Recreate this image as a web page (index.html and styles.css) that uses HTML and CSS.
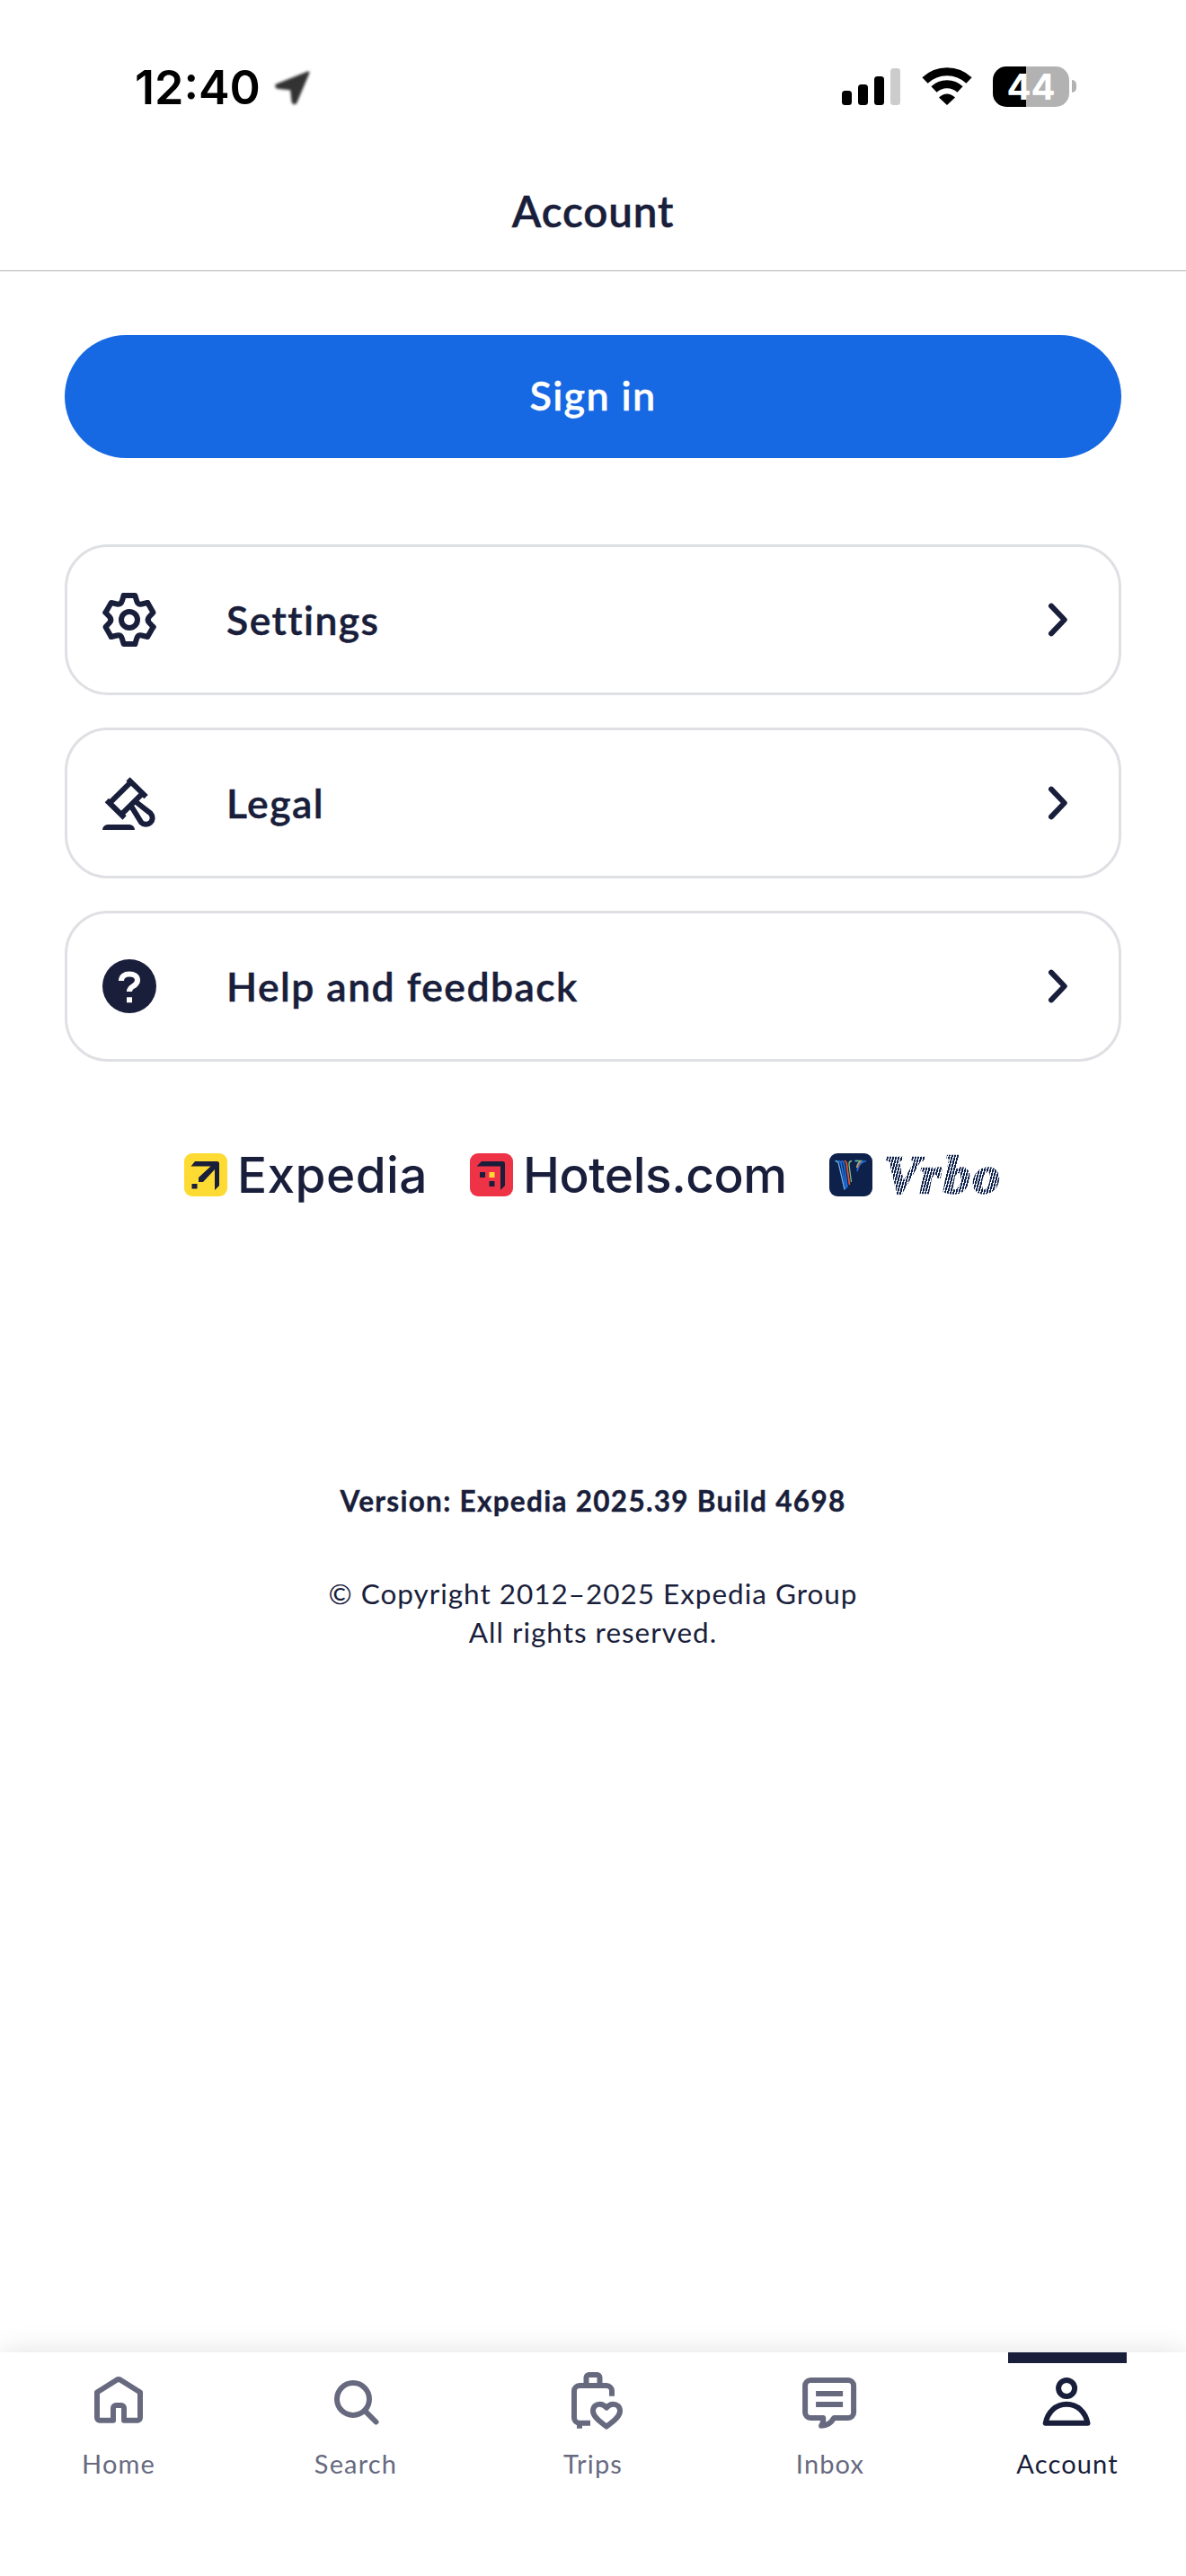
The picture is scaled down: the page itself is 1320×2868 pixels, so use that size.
FILE: index.html
```html
<!DOCTYPE html>
<html lang="en">
<head>
<meta charset="utf-8">
<title>Account</title>
<link rel="stylesheet" href="styles.css">
</head>
<body>
<div class="screen">
  <header class="header">
    <div class="status">
      <div class="status-left">
        <span class="time">12:40</span>
        <svg class="location" width="48" height="48" viewBox="0 0 48 48"><path d="M41 9 6 23Q5 25 8 25.500L22.500 27 24 41Q25 44 27 42Z" /></svg>
      </div>
      <div class="status-right">
        <svg class="signal" width="65" height="41" viewBox="0 0 65 41"><rect x="0" y="25" width="11" height="16" rx="3.500"/><rect x="18" y="18" width="11" height="23" rx="3.500"/><rect x="36" y="9" width="11" height="32" rx="3.500"/><rect class="dim" x="54" y="0" width="11" height="41" rx="3.500"/></svg>
        <svg class="wifi" width="58" height="42" viewBox="0 0 58 42"><path d="M4.500 14.500A35.500 35.500 0 0 1 53.500 14.500M14.500 24.500A21 21 0 0 1 43.500 24.500"/><path class="dot" d="M29 42 20 33.500Q29 25.500 38 33.500Z"/></svg>
        <div class="battery"><span class="level">44</span></div>
      </div>
    </div>
    <h1 class="title">Account</h1>
  </header>

  <main class="main">
    <button class="signin">Sign in</button>
    <nav class="cards">
      <a class="card">
        <svg class="icon" viewBox="-12 -12 24 24"><defs><path id="tooth" d="M-2.100-9H2.100L2.750-6.900Q3.200-5.550 4.600-5.830L6.740-6.320"/></defs><use href="#tooth"/><use href="#tooth" transform="rotate(60)"/><use href="#tooth" transform="rotate(120)"/><use href="#tooth" transform="rotate(180)"/><use href="#tooth" transform="rotate(240)"/><use href="#tooth" transform="rotate(300)"/><circle r="3"/></svg>
        <span class="label">Settings</span>
        <svg class="icon" viewBox="0 0 24 24"><path d="M10 6.900 14.900 12 10 17.100"/></svg>
      </a>
      <a class="card">
        <svg class="icon" viewBox="0 0 24 24"><path class="butt" d="M11.500 3.100 18.200 9.700M3.600 11 10.200 17.500M12.500 4.300 5.100 11.600M16.700 8.600 9.400 15.900M12.700 13.200 16.400 19.200A2.400 2.400 0 0 0 19.900 15.900L14.300 11.500"/><path class="solid" d="M2 22a2 2 0 0 1 2-2h8a2 2 0 0 1 2 2z"/></svg>
        <span class="label">Legal</span>
        <svg class="icon" viewBox="0 0 24 24"><path d="M10 6.900 14.900 12 10 17.100"/></svg>
      </a>
      <a class="card">
        <svg class="icon" viewBox="0 0 24 24"><circle class="solid" cx="12" cy="12" r="10"/><path class="mark" d="M9 10C9 8.300 10.300 7.500 12 7.500S15 8.300 15 9.800C15 11 14.200 11.500 13.400 12 12.500 12.500 12 12.900 12 14M12 16.100v2"/></svg>
        <span class="label">Help and feedback</span>
        <svg class="icon" viewBox="0 0 24 24"><path d="M10 6.900 14.900 12 10 17.100"/></svg>
      </a>
    </nav>

    <div class="brands">
      <div class="brand">
        <svg width="48" height="48" viewBox="0 0 48 48"><rect width="48" height="48" rx="9" fill="#fddb32"/><path fill="#191e3b" d="M12 9H36.500Q39 9 39 11.500V36L34 41V18L21 32H16V27L29.500 14.500H7.500ZM8.500 34h6v5.500h-6z"/></svg>
        <span class="name expedia">Expedia</span>
      </div>
      <div class="brand">
        <svg width="48" height="48" viewBox="0 0 48 48"><rect width="48" height="48" rx="9" fill="#ef3346"/><path fill="#191e3b" d="M13 9H36.500Q39 9 39 11.500V36L34 41V14.500H7.500ZM11 21h6v6h-6zM21.500 31h6v6h-6z"/><path fill="#fddb32" d="M21.500 21h6v6h-6z"/></svg>
        <span class="name hotels">Hotels.com</span>
      </div>
      <div class="brand">
        <svg width="48" height="48" viewBox="0 0 48 48" fill="none" stroke-width="1.300"><rect width="48" height="48" rx="9" fill="#0e214b"/><path stroke="#6bb4f0" d="M6.500 8.500Q10 8.500 10.500 12L17 40.500"/><path stroke="#1f6fe0" stroke-width="1.700" d="M10 8.500Q13 9 13.500 13L18.500 40M13 8.500Q16 9 16.500 13L20 38M28 8.500h4M41 8.500Q33 10 31 20M38 8.500Q33 10 31 17"/><path stroke="#ea5a2a" stroke-width="1.700" d="M16.500 8.500Q19.500 9 19.500 13L22.500 35M35.500 8.500Q32 11 31 16"/><path stroke="#7cc08c" d="M25 8.500Q21.500 9 22 13L24.500 32M29 8.500h6Q31 11 30.500 16"/></svg>
        <span class="name vrbo">Vrbo</span>
      </div>
    </div>

    <div class="about">
      <p class="version">Version: Expedia 2025.39 Build 4698</p>
      <p class="copyright">© Copyright 2012–2025 Expedia Group<br>All rights reserved.</p>
    </div>
  </main>

  <nav class="tabs">
    <a class="tab"><svg class="icon" viewBox="0 0 24 24"><path d="M10 18.900H5a1 1 0 0 1-1-1V8.500L11.300 3.900Q12 3.500 12.700 3.900L20 8.500V17.900a1 1 0 0 1-1 1H14V14.300a1 1 0 0 0-1-1H11a1 1 0 0 0-1 1Z"/></svg><span>Home</span></a>
    <a class="tab"><svg class="icon" viewBox="0 0 24 24"><circle cx="11" cy="11" r="6"/><path d="M15.300 15.300 19.500 19.500"/></svg><span>Search</span></a>
    <a class="tab"><svg class="icon" viewBox="0 0 24 24"><path class="butt" d="M19 9.900V8a2 2 0 0 0-2-2H7a2 2 0 0 0-2 2V17.900a2 2 0 0 0 2 2H11M9.500 6V3a1 1 0 0 1 1-1h3a1 1 0 0 1 1 1V6M7 20v1.900"/><path d="M17 21.200C14 19 12 17.300 12 15.400 12 13.900 13.100 12.900 14.500 12.900 15.500 12.900 16.400 13.500 17 14.200 17.600 13.500 18.500 12.900 19.500 12.900 20.900 12.900 22 13.900 22 15.400 22 17.300 20 19 17 21.200Z"/></svg><span>Trips</span></a>
    <a class="tab"><svg class="icon" viewBox="0.300 0 24 24"><path d="M5 4H19a2 2 0 0 1 2 2V16a2 2 0 0 1-2 2H13.700C12.700 19.800 11 20.900 9 20.900Q9.900 19.600 9.700 18H5a2 2 0 0 1-2-2V6a2 2 0 0 1 2-2Z"/><path class="butt" d="M7 9H17M7 13H17"/></svg><span>Inbox</span></a>
    <a class="tab active"><svg class="icon" viewBox="0.300 0 24 24"><circle cx="12" cy="7" r="3"/><path d="M4.200 19.900H19.800C19 15.800 16 12.900 12 12.900S5 15.800 4.200 19.900Z"/></svg><span>Account</span></a>
  </nav>
</div>
</body>
</html>
```
FILE: styles.css
```css
* { box-sizing: border-box; }

body {
  margin: 0;
  background: #fff;
  color: #191e3b;
  font-family: Lato, "Open Sans", sans-serif;
}

.screen {
  display: flex;
  flex-direction: column;
  width: 1320px;
  height: 2868px;
  overflow: hidden;
}

.header { border-bottom: 1px solid #b2b2b2; }

.status {
  display: flex;
  justify-content: space-between;
  align-items: center;
  height: 168px;
  padding: 24px 122px 0 150px;
  color: #000;
  font-family: Inter, sans-serif;
}

.status-left, .status-right { display: flex; align-items: center; }

.time {
  font-size: 52px;
  font-weight: 600;
  line-height: 60px;
  padding-top: 4px;
}

.location {
  margin-left: 12px;
  fill: #333;
  stroke: #333;
  stroke-width: 3;
  stroke-linejoin: round;
  filter: blur(1.500px);
}

.signal .dim { fill: #ccc; }
.wifi { margin: 0 22px 0 23px; fill: none; stroke: #000; stroke-width: 9; }
.wifi .dot { fill: #000; stroke: none; }

.battery { display: flex; align-items: center; }
.level {
  width: 85px;
  height: 45px;
  border-radius: 15px;
  background: linear-gradient(90deg, #000 37px, #b2b2b2 37px);
  color: #fff;
  font-size: 40px;
  font-weight: 700;
  line-height: 45px;
  text-align: center;
}
.battery::after {
  content: "";
  width: 5px;
  height: 14px;
  margin-left: 3px;
  border-radius: 0 5px 5px 0;
  background: #b2b2b2;
}

.title {
  height: 133px;
  margin: 0;
  padding-top: 1px;
  font-size: 47.500px;
  font-weight: 600;
  line-height: 132px;
  letter-spacing: .900px;
  text-align: center;
  -webkit-text-stroke: .5px;
}

.main { flex: 1; padding: 71px 72px 0; }

.signin {
  display: block;
  width: 100%;
  height: 137px;
  padding: 0 0 3px;
  border: 0;
  border-radius: 69px;
  background: #1668e3;
  color: #fff;
  font: 600 45px/1 Lato, sans-serif;
  letter-spacing: 1.300px;
  -webkit-text-stroke: .4px;
}

.cards { display: grid; gap: 36px; margin-top: 96px; }

.card {
  display: flex;
  align-items: center;
  height: 168px;
  padding: 0 33px;
  border: 3px solid #dfe0e4;
  border-radius: 48px;
}

.label {
  flex: 1;
  margin-left: 72px;
  padding-bottom: 2px;
  font-size: 44.500px;
  font-weight: 600;
  letter-spacing: 1.450px;
  -webkit-text-stroke: .5px;
}

.icon {
  width: 72px;
  height: 72px;
  fill: none;
  stroke: currentColor;
  stroke-width: 2;
  stroke-linecap: round;
  stroke-linejoin: round;
}
.icon .butt { stroke-linecap: butt; }
.icon .solid { fill: currentColor; stroke: none; }
.icon .mark { stroke: #fff; stroke-linecap: butt; }

.brands {
  display: flex;
  gap: 50px;
  margin-top: 102px;
  padding-left: 133px;
}
.brand { display: flex; align-items: center; height: 48px; }
.name {
  margin-left: 11px;
  font-family: Inter, sans-serif;
  font-size: 55px;
  font-weight: 500;
  line-height: 48px;
  white-space: nowrap;
}
.expedia { width: 209px; letter-spacing: .400px; }
.hotels { width: 291px; letter-spacing: -.500px; }
.vrbo {
  padding: 0 8px 0 2px;
  font-family: "Liberation Serif", serif;
  font-size: 60px;
  font-style: italic;
  font-weight: 700;
  letter-spacing: 3px;
  color: transparent;
  background: repeating-linear-gradient(105deg, #0e214b 0 1.800px, #fff 1.800px 3px);
  -webkit-background-clip: text;
  background-clip: text;
  -webkit-text-stroke: 2.500px transparent;
}

.about {
  margin-top: 318px;
  font-size: 31.500px;
  line-height: 43px;
  letter-spacing: .980px;
  text-align: center;
}
.about p { margin: 0; }
.version { font-weight: 700; letter-spacing: 1.300px; -webkit-text-stroke: .4px; }
.about .copyright { margin-top: 60px; }

.tabs {
  display: flex;
  height: 249px;
  box-shadow: 0 0 30px rgba(0, 0, 0, .12);
}
.tab {
  position: relative;
  display: flex;
  flex: 1;
  flex-direction: column;
  align-items: center;
  padding-top: 19px;
  color: #676a7f;
  font-size: 29px;
  line-height: 36px;
  letter-spacing: 1.150px;
}
.tab span { margin-top: 15px; }
.tab.active { color: #191e3b; }
.tab.active::before {
  content: "";
  position: absolute;
  top: 0;
  width: 132px;
  height: 12px;
  background: #191e3b;
}
```
